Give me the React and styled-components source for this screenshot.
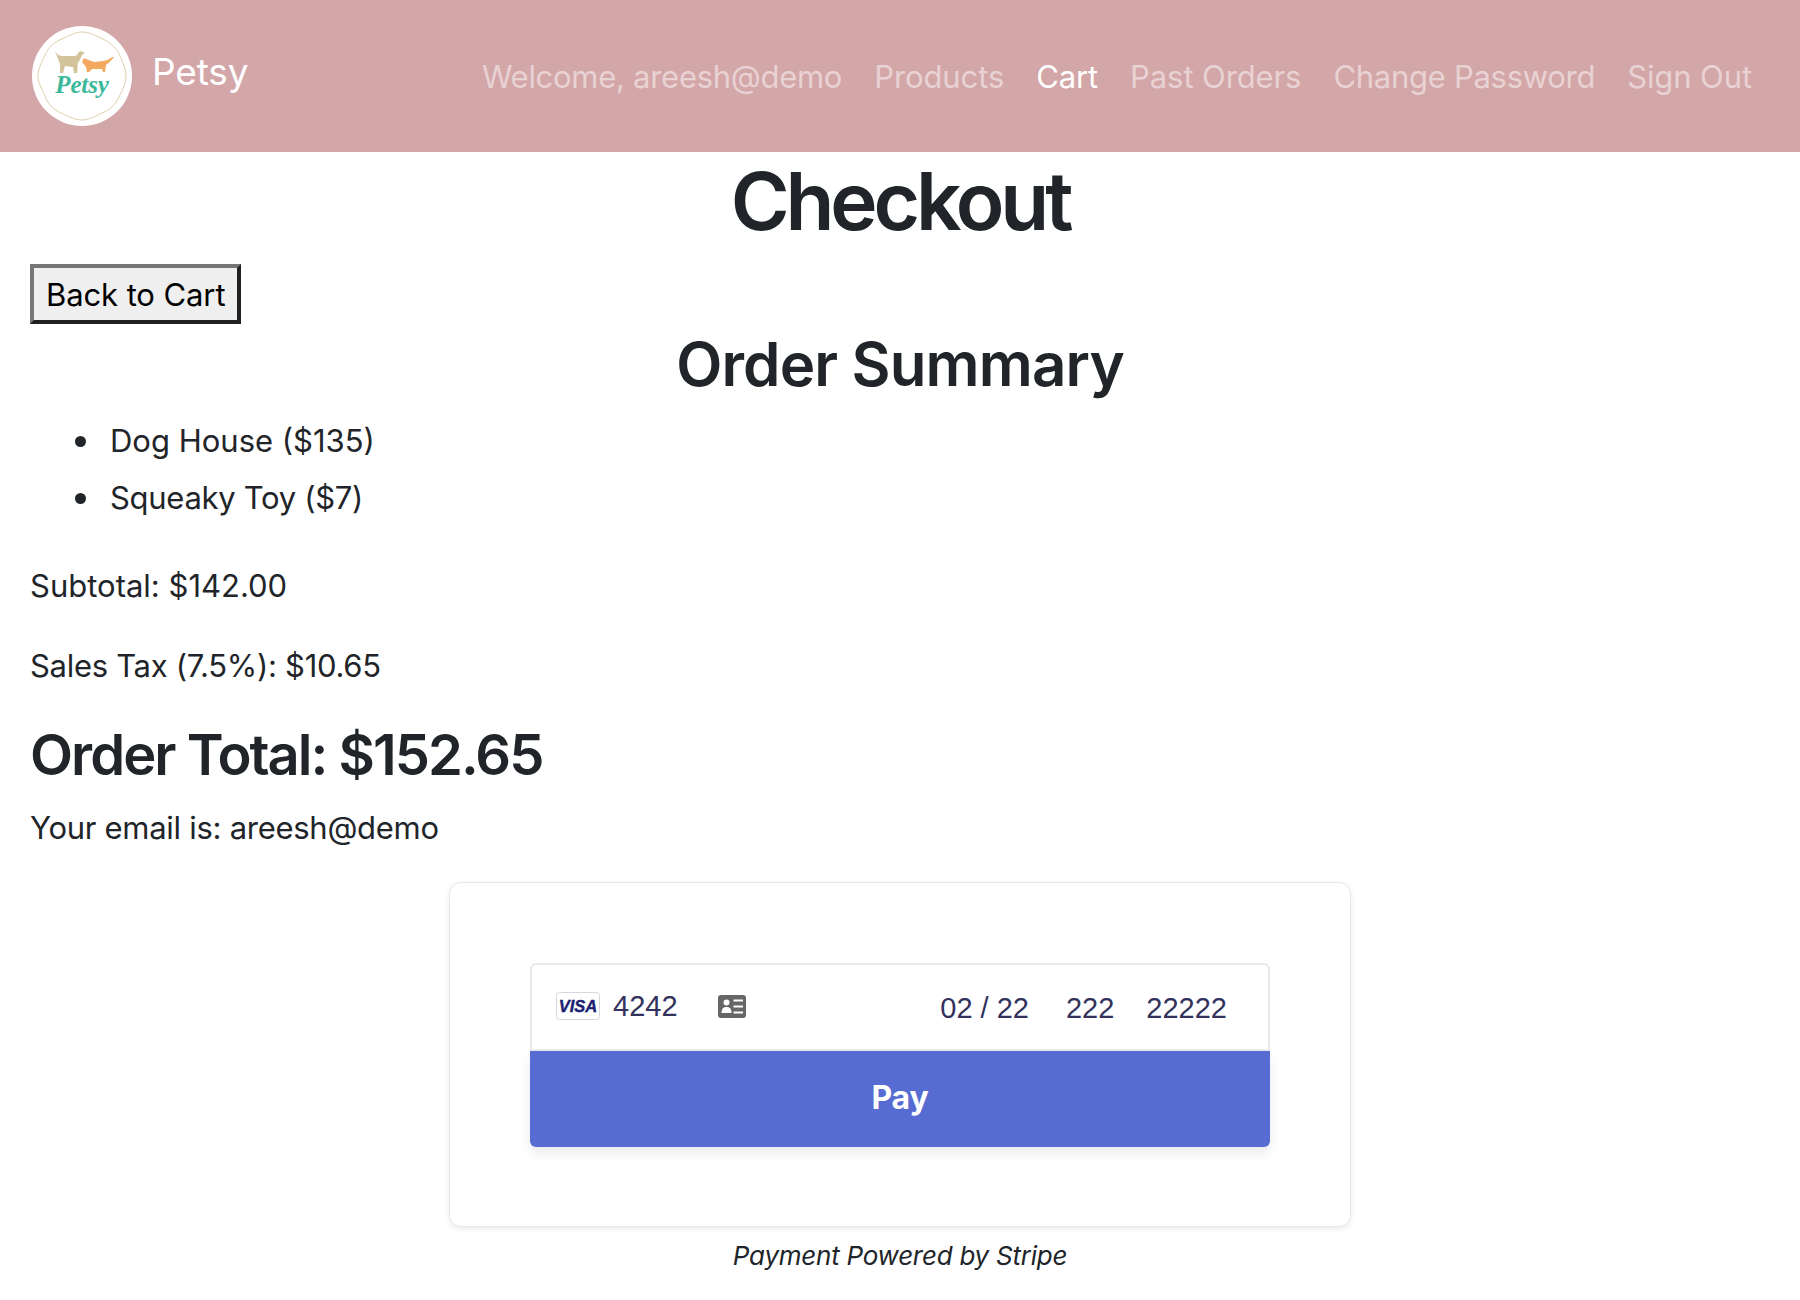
import React from 'react';
import styled, { createGlobalStyle } from 'styled-components';

const GlobalStyle = createGlobalStyle`
    * { box-sizing: border-box; }
    body {
        margin: 0;
        background: #fff;
        color: #212529;
        font-family: Inter, "Liberation Sans", sans-serif;
        font-size: 31px;
        line-height: 48px;
        letter-spacing: -0.15px;
    }
`;

const Logo = () => (
    <svg width="100" height="100" viewBox="0 0 100 100">
        <circle cx="50" cy="50" r="50" fill="#fff" />
        <path
            d="M50 6 C58 6 64 10 71 13 C79 17 85 22 88 30 C91 37 94 43 94 50 C94 58 90 64 87 71 C83 79 78 84 70 87 C63 90 57 94 50 94 C42 94 36 90 29 87 C21 83 16 78 13 70 C10 63 6 57 6 50 C6 42 10 36 13 29 C17 21 22 16 30 13 C37 10 43 6 50 6 Z"
            fill="none"
            stroke="#dccfa8"
            strokeWidth="1"
        />
        <path
            d="M23 25 C25 29 28 30 31 30 L43 30 C45 30 46 27 47 26 C48 25 50 25 51 26 L53 27 L50 29 C49 32 47 35 46 37 C45 39 46 44 45 47 L42 47 L41 41 L33 40 L31 47 L28 47 L28 38 C26 33 25 30 23 25 Z"
            fill="#d2c39b"
        />
        <path
            d="M50 36 L52 32 L54 33 L62 36 L71 35 C75 35 78 32 81 31 L82 31.5 C79 34 77 37 74 39 L73 46 L71 46 L70 43 L60 43 L57 46 L55 46 L54 41 Z"
            fill="#f3a95f"
        />
        <StampText x="50" y="67" textAnchor="middle" fontSize="25">Petsy</StampText>
    </svg>
);

const VisaBadge = () => (
    <svg width="44" height="28" viewBox="0 0 44 28">
        <rect x="0.5" y="0.5" width="43" height="27" rx="3" fill="#fff" stroke="#d8d8dc" />
        <BadgeText x="22" y="20" textAnchor="middle" fontSize="16.5">VISA</BadgeText>
    </svg>
);

const IdCardIcon = () => (
    <svg width="28" height="23" viewBox="0 0 28 23">
        <rect width="28" height="23" rx="3" fill="#666" />
        <circle cx="8.5" cy="7.5" r="3" fill="#fff" />
        <path d="M3.5 18 C3.5 13.5 5.5 12 8.5 12 C11.5 12 13.5 13.5 13.5 18 Z" fill="#fff" />
        <path d="M15.5 5.5 H25 M15.5 11.5 H25 M15.5 17.5 H25" stroke="#fff" strokeWidth="2" />
    </svg>
);

const App = () => {
    return (
        <>
            <GlobalStyle />
            <NavBar>
                <Brand>
                    <Logo />
                    <BrandName>Petsy</BrandName>
                </Brand>
                <NavLinks>
                    <NavLink $tight>Welcome, areesh@demo</NavLink>
                    <NavLink>Products</NavLink>
                    <NavLink $active>Cart</NavLink>
                    <NavLink>Past Orders</NavLink>
                    <NavLink $tight>Change Password</NavLink>
                    <NavLink>Sign Out</NavLink>
                </NavLinks>
            </NavBar>
            <Page>
                <Title>Checkout</Title>
                <BackButton>Back to Cart</BackButton>
                <Subtitle>Order Summary</Subtitle>
                <Items>
                    <Item>Dog House ($135)</Item>
                    <Item $tight>Squeaky Toy ($7)</Item>
                </Items>
                <Line>Subtotal: $142.00</Line>
                <Line $tight>Sales Tax (7.5%): $10.65</Line>
                <Total>Order Total: $152.65</Total>
                <Email>Your email is: areesh@demo</Email>
                <PayCard>
                    <CardRow>
                        <CardLeft>
                            <VisaBadge />
                            <CardNumber>4242</CardNumber>
                            <IdIcon><IdCardIcon /></IdIcon>
                        </CardLeft>
                        <CardRight>
                            <CardField $wide>02 / 22</CardField>
                            <CardField>222</CardField>
                            <CardField>22222</CardField>
                        </CardRight>
                    </CardRow>
                    <PayButton>Pay</PayButton>
                </PayCard>
                <PoweredBy>Payment Powered by Stripe</PoweredBy>
            </Page>
        </>
    )
}

export default App;

const StampText = styled.text`
    font-family: "Liberation Serif", serif;
    font-style: italic;
    font-weight: 700;
    fill: #3cb89b;
`;

const BadgeText = styled.text`
    font-family: "Liberation Sans", sans-serif;
    font-style: italic;
    font-weight: 700;
    fill: #1a1f71;
    stroke: #1a1f71;
    stroke-width: 0.4px;
`;

const NavBar = styled.nav`
    height: 152px;
    padding: 0 48px 0 32px;
    background: #d3a6a8;
    display: flex;
    align-items: center;
    justify-content: space-between;
`;

const Brand = styled.div`
    display: flex;
    align-items: center;
    gap: 20px;
`;

const BrandName = styled.span`
    color: #fff;
    font-size: 37px;
    margin-top: -9px;
`;

const NavLinks = styled.div`
    display: flex;
    gap: 32px;
    margin-top: 2px;
`;

const NavLink = styled.a`
    color: ${props => props.$active ? '#fff' : 'rgba(255, 255, 255, 0.5)'};
    letter-spacing: ${props => props.$tight ? '-0.28px' : '-0.1px'};
`;

const Page = styled.main`
    padding: 0 30px;
`;

const Title = styled.h1`
    margin: 1px 0 15px;
    font-size: 80px;
    line-height: 96px;
    font-weight: 560;
    letter-spacing: -4.1px;
    text-align: center;
`;

const BackButton = styled.button`
    display: block;
    height: 60px;
    padding: 2px 12px 0;
    background: #efefef;
    color: #000;
    border: 4px outset #767676;
    font: inherit;
    letter-spacing: -0.1px;
`;

const Subtitle = styled.h2`
    margin: 0 0 13px;
    font-size: 60px;
    line-height: 80px;
    font-weight: 560;
    letter-spacing: -0.85px;
    text-align: center;
`;

const Items = styled.ul`
    margin: 0 0 40px;
    padding-left: 80px;
    list-style: none;
`;

const Item = styled.li`
    position: relative;
    margin-bottom: 9px;
    letter-spacing: ${props => props.$tight ? '-0.3px' : '0'};

    &::before {
        content: '';
        position: absolute;
        left: -35px;
        top: 19px;
        width: 11px;
        height: 11px;
        border-radius: 50%;
        background: #212529;
    }
`;

const Line = styled.p`
    margin: 0 0 32px;
    letter-spacing: ${props => props.$tight ? '-0.3px' : '0'};
`;

const Total = styled.h3`
    margin: 0 0 15px;
    font-size: 56px;
    line-height: 67px;
    font-weight: 560;
    letter-spacing: -1.95px;
`;

const Email = styled.p`
    margin: 0 0 30px;
    letter-spacing: -0.28px;
`;

const PayCard = styled.section`
    width: 902px;
    height: 345px;
    margin: 0 auto;
    padding: 80px;
    border: 1px solid #e6e6eb;
    border-radius: 12px;
    box-shadow: 0 2px 5px rgba(50, 50, 93, 0.1);
`;

const CardRow = styled.div`
    height: 88px;
    padding: 0 41px 0 24px;
    border: 2px solid #e8e8ee;
    border-radius: 6px 6px 0 0;
    display: flex;
    align-items: center;
    justify-content: space-between;
    color: #32325d;
    font-family: "Liberation Sans", sans-serif;
    font-size: 29px;
    letter-spacing: 0;
`;

const CardLeft = styled.div`
    display: flex;
    align-items: center;
    margin-top: -2px;
`;

const CardRight = styled.div`
    display: flex;
    gap: 32px;
    margin-top: 1px;
`;

const CardNumber = styled.span`
    margin-left: 13px;
`;

const IdIcon = styled.span`
    display: flex;
    margin-left: 40px;
`;

const CardField = styled.span`
    margin-right: ${props => props.$wide ? '5px' : '0'};
`;

const PayButton = styled.button`
    display: block;
    width: 740px;
    height: 96px;
    padding: 0 0 3px;
    border: 0;
    border-radius: 0 0 6px 6px;
    background: #566cd2;
    color: #fff;
    font: 700 32px Inter, sans-serif;
    letter-spacing: -0.2px;
    box-shadow: 0 6px 12px rgba(50, 50, 93, 0.1);
`;

const PoweredBy = styled.p`
    margin: 5px 0 0;
    text-align: center;
    font-size: 26px;
    letter-spacing: -0.25px;
    font-style: italic;
`;
